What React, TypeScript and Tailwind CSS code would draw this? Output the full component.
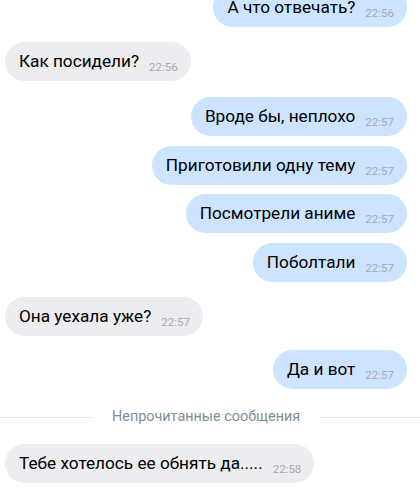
import React from 'react'

type Msg = { text: string; time: string; out: boolean; gap: number }

const messages: Msg[] = [
    { text: 'А что отвечать?', time: '22:56', out: true, gap: 0 },
    { text: 'Как посидели?', time: '22:56', out: false, gap: 15 },
    { text: 'Вроде бы, неплохо', time: '22:57', out: true, gap: 16 },
    { text: 'Приготовили одну тему', time: '22:57', out: true, gap: 10 },
    { text: 'Посмотрели аниме', time: '22:57', out: true, gap: 9 },
    { text: 'Поболтали', time: '22:57', out: true, gap: 10 },
    { text: 'Она уехала уже?', time: '22:57', out: false, gap: 15 },
    { text: 'Да и вот', time: '22:57', out: true, gap: 14 },
]

const gapClass: Record<number, string> = {
    0: 'mt-0',
    9: 'mt-[9px]',
    10: 'mt-[10px]',
    14: 'mt-[14px]',
    15: 'mt-[15px]',
    16: 'mt-[16px]',
}

function Bubble({ text, time, out }: { text: string; time: string; out: boolean }) {
    return (
        <div
            className={`h-[39px] rounded-full pl-[14px] pr-[13px] flex items-baseline pt-[9px] ${
                out ? 'self-end bg-[#cce4ff]' : 'self-start bg-[#ebedf0]'
            }`}
        >
            <span className="text-[17.2px] leading-[20px] text-black">{text}</span>
            <span className="ml-[10px] text-[11.5px] leading-none text-[#a3a8ae] relative top-[4px]">{time}</span>
        </div>
    )
}

export default function App() {
    return (
        <div className="w-[420px] h-[491px] overflow-hidden bg-white" style={{ fontFamily: 'Roboto, "Noto Sans", sans-serif' }}>
            <div className="flex flex-col pl-[5px] pr-[13px] -mt-[12px]">
                {messages.map((m, i) => (
                    <div key={i} className={`flex flex-col ${gapClass[m.gap]}`}>
                        <Bubble text={m.text} time={m.time} out={m.out} />
                    </div>
                ))}
            </div>

            {/* unread divider */}
            <div className="flex items-center h-[55px] pt-[1px]">
                <div className="w-[93px] h-px bg-[#e7e8ec]" />
                <span className="pl-[19px] pr-[20px] text-[14.4px] text-[#818c99]">Непрочитанные сообщения</span>
                <div className="flex-1 h-px bg-[#e7e8ec]" />
            </div>

            <div className="flex flex-col pl-[5px] pr-[13px]">
                <Bubble text="Тебе хотелось ее обнять да....." time="22:58" out={false} />
            </div>
        </div>
    )
}
